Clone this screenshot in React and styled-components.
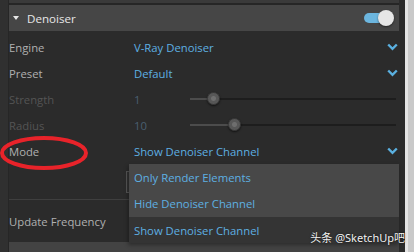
import styled, { createGlobalStyle } from "styled-components"

const GlobalStyle = createGlobalStyle`
    html, body {
        margin: 0;
        padding: 0;
        background: #2b2b2b;
        overflow: hidden;
    }
    * {
        box-sizing: border-box;
    }
`

const Frame = styled.div`
    display: flex;
    position: relative;
    width: 414px;
    height: 252px;
    overflow: hidden;
    background: #2b2b2b;
    font-family: "Open Sans", "Noto Sans", sans-serif;
    font-size: 11.3px;
`
const Gutter = styled.div`
    width: 9px;
    flex: none;
    background: #303030;
    border-right: 1px solid #262626;
`
const Main = styled.div`
    width: 396px;
    min-width: 0;
    flex: none;
    display: flex;
    flex-direction: column;
    overflow: hidden;
    & > * {
        flex-shrink: 0;
    }
`
const PrevSection = styled.div`
    height: 5px;
    margin-right: 6px;
    background: #3a3a3a;
    border-bottom: 2px solid #262626;
`
const SectionHeader = styled.div`
    display: flex;
    align-items: center;
    height: 26px;
    margin-right: 6px;
    padding: 0 5px 0 4px;
    background: ${p => p.$dim ? "#434343" : "#464646"};
    color: #e6e6e6;
    font-size: 11.6px;
`
const Caret = styled.span`
    width: 0;
    height: 0;
    ${p => p.$open ? `
        border-left: 3.5px solid transparent;
        border-right: 3.5px solid transparent;
        border-top: 4px solid #e6e6e6;
        margin-right: 8px;
    ` : `
        border-top: 3.5px solid transparent;
        border-bottom: 3.5px solid transparent;
        border-left: 4px solid #e6e6e6;
        margin-right: 11px;
    `}
`
const HeaderTitle = styled.span`
    flex: 1;
`
const Toggle = styled.div`
    position: relative;
    width: 30px;
    height: 16px;
    display: flex;
    align-items: center;
`
const ToggleTrack = styled.div`
    width: 24px;
    height: 10px;
    border-radius: 5px;
    background: #6cb6df;
`
const ToggleKnob = styled.div`
    position: absolute;
    right: 0;
    top: 0;
    width: 16px;
    height: 16px;
    border-radius: 50%;
    background: #e6e6e6;
    box-shadow: 0 1px 2px rgba(0, 0, 0, 0.5);
`
const Rows = styled.div`
    display: flex;
    flex-direction: column;
    padding-top: 3px;
`
const Row = styled.div`
    display: flex;
    align-items: stretch;
    height: ${p => p.$h || 26}px;
    padding-right: 6px;
`
const Label = styled.div`
    width: 125px;
    flex: none;
    display: flex;
    align-items: center;
    color: ${p => p.$dim ? "#545454" : "#b0b0b0"};
`
const ValueCell = styled.div`
    position: relative;
    flex: 1;
    min-width: 0;
    display: flex;
    align-items: center;
`
const Value = styled.span`
    flex: ${p => p.$fixed ? "none" : 1};
    width: ${p => p.$fixed ? "56px" : "auto"};
    color: ${p => p.$dim ? "#4a5f70" : "#5eb0e2"};
`
const Chevron = styled.svg`
    flex: none;
    width: 11px;
    height: 8px;
    margin-right: 1px;
`
const SliderTrack = styled.div`
    position: relative;
    flex: 1;
    height: 2px;
    margin-right: 3px;
    background: #1d1d1d;
`
const SliderFill = styled.div`
    height: 2px;
    background: #4c4c4c;
`
const SliderKnob = styled.div`
    position: absolute;
    top: -6px;
    width: 13px;
    height: 13px;
    margin-left: -6px;
    border-radius: 50%;
    background: radial-gradient(circle, #6e6e6e 0 2px, #575757 3px);
    border: 1px solid #3a3a3a;
    box-shadow: 0 1px 2px rgba(0, 0, 0, 0.6);
`
const ButtonStrip = styled.div`
    height: 36px;
    margin-right: 270px;
    padding: 7px 0 0 117px;
    border-bottom: 1px solid #3f3f3f;
`
const GhostButton = styled.div`
    width: 40px;
    height: 22px;
    border: 1px solid #555;
    background: #333;
`
const Dropdown = styled.div`
    position: absolute;
    top: 100%;
    left: -5px;
    right: 0;
    z-index: 2;
    display: flex;
    flex-direction: column;
    box-shadow: -1px 2px 4px rgba(0, 0, 0, 0.35);
`
const Option = styled.div`
    height: ${p => p.$h || 26}px;
    display: flex;
    align-items: center;
    padding-left: 5px;
    color: #5eb0e2;
    background: ${p => p.$current ? "#343434" : "#484848"};
`
const Scrollbar = styled.div`
    width: 9px;
    flex: none;
    background: #c9c9c9;
    border-left: 3px solid #e4e4e4;
`
const Annotation = styled.svg`
    position: absolute;
    left: 0;
    top: 134px;
    width: 92px;
    height: 38px;
    z-index: 3;
`
const Watermark = styled.div`
    position: absolute;
    right: 9px;
    bottom: 8px;
    z-index: 4;
    color: #f2f2f2;
    font-family: "Noto Sans", "Noto Sans CJK SC", sans-serif;
    font-size: 11px;
    line-height: 13px;
    text-shadow: 0 0 2px rgba(0, 0, 0, 0.8);
`

function Down () {
    return (
        <Chevron viewBox="0 0 11 8">
            <path d="M1.2 1.5 L5.5 5.8 L9.8 1.5" fill="none" stroke="#5ab0e0" strokeWidth="2.4" />
        </Chevron>
    )
}

function Slider ({pct}) {
    return (
        <SliderTrack>
            <SliderFill style={{ width: pct + "%" }} />
            <SliderKnob style={{ left: pct + "%" }} />
        </SliderTrack>
    )
}

const options = [
    { text: "Only Render Elements", h: 26 },
    { text: "Hide Denoiser Channel", h: 27 },
    { text: "Show Denoiser Channel", h: 26, current: true },
]

export default function App () {
    return (
        <Frame>
            <GlobalStyle />
            <Gutter />
            <Main>
                <PrevSection />
                <SectionHeader>
                    <Caret $open />
                    <HeaderTitle>Denoiser</HeaderTitle>
                    <Toggle>
                        <ToggleTrack />
                        <ToggleKnob />
                    </Toggle>
                </SectionHeader>
                <Rows>
                    <Row>
                        <Label>Engine</Label>
                        <ValueCell><Value>V-Ray Denoiser</Value><Down /></ValueCell>
                    </Row>
                    <Row>
                        <Label>Preset</Label>
                        <ValueCell><Value>Default</Value><Down /></ValueCell>
                    </Row>
                    <Row>
                        <Label $dim>Strength</Label>
                        <ValueCell><Value $dim $fixed>1</Value><Slider pct={11} /></ValueCell>
                    </Row>
                    <Row>
                        <Label $dim>Radius</Label>
                        <ValueCell><Value $dim $fixed>10</Value><Slider pct={21.5} /></ValueCell>
                    </Row>
                    <Row>
                        <Label>Mode</Label>
                        <ValueCell>
                            <Value>Show Denoiser Channel</Value><Down />
                            <Dropdown>
                                {options.map(o => (
                                    <Option key={o.text} $h={o.h} $current={o.current}>{o.text}</Option>
                                ))}
                            </Dropdown>
                        </ValueCell>
                    </Row>
                </Rows>
                <ButtonStrip><GhostButton /></ButtonStrip>
                <Row $h={42}>
                    <Label>Update Frequency</Label>
                </Row>
                <SectionHeader $dim>
                    <Caret />
                    <HeaderTitle>Configuration</HeaderTitle>
                </SectionHeader>
            </Main>
            <Scrollbar />
            <Annotation viewBox="0 0 92 38">
                <ellipse cx="44" cy="19" rx="42" ry="15" fill="none" stroke="#e8232a" strokeWidth="4" />
            </Annotation>
            <Watermark>头条 @SketchUp吧</Watermark>
        </Frame>
    )
}
